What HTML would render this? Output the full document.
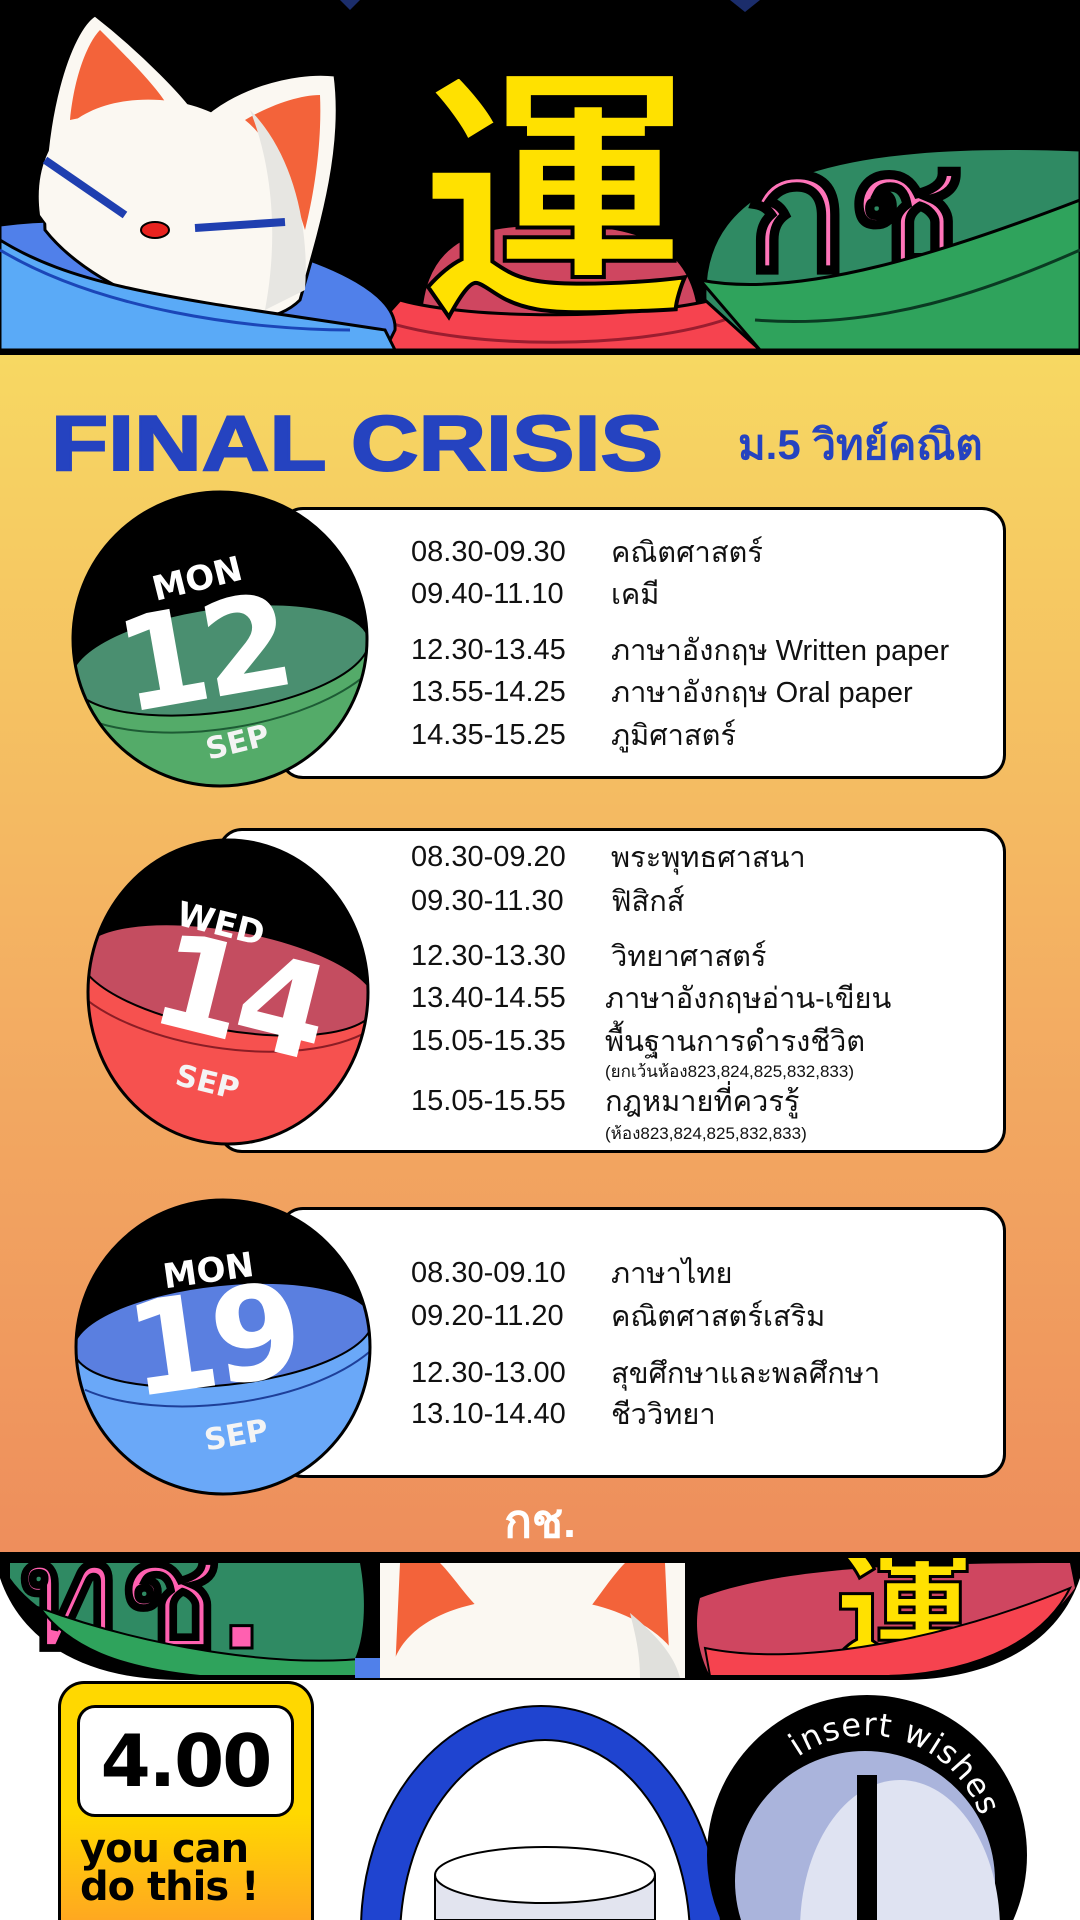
<!DOCTYPE html>
<html><head><meta charset="utf-8">
<style>
*{margin:0;padding:0;box-sizing:border-box}
html,body{width:1080px;height:1920px;overflow:hidden}
body{background:#fff;font-family:"Liberation Sans","Noto Sans CJK SC",sans-serif;position:relative}
.abs{position:absolute}
.panel{left:0;top:350px;width:1080px;height:1208px;background:linear-gradient(#f7d862,#f3ad62 55%,#ee8e5c);border-top:5px solid #000;border-bottom:6px solid #000}
.card{position:absolute;background:#fff;border:3px solid #000;border-radius:24px}
.row{position:absolute;font-size:29px;color:#111;white-space:nowrap;font-family:"Liberation Sans",sans-serif;line-height:36px}
.row .t{position:absolute;left:0;top:0}
.row .n{position:absolute;left:200px;top:1px}
.small{position:absolute;font-size:17px;color:#111;white-space:nowrap}
</style></head><body>

<svg class="abs" style="left:0;top:0" width="1080" height="352" viewBox="0 0 1080 352">
<rect width="1080" height="352" fill="#000"/>
<polygon points="340,0 360,0 350,10" fill="#1b2d6b"/>
<polygon points="730,0 760,0 745,12" fill="#1b2d6b"/>
<path d="M420,330 C420,250 460,220 560,225 C660,222 700,260 700,330 Z" fill="#cf4660" stroke="#000" stroke-width="3"/>
<path d="M355,350 L400,300 C470,320 640,320 720,298 L760,350 Z" fill="#f6434f" stroke="#000" stroke-width="3"/>
<path d="M380,320 C470,350 640,350 730,318" fill="none" stroke="#9a1d2f" stroke-width="3"/>
<text x="555" y="295" font-size="270" font-weight="bold" fill="#ffe100" stroke="#000" stroke-width="4" text-anchor="middle" font-family="Noto Sans CJK SC,sans-serif">運</text>
<path d="M705,300 C700,180 830,140 1080,150 L1080,350 L760,350 Z" fill="#2f8a63" stroke="#000" stroke-width="3"/>
<text x="745" y="270" font-size="170" font-weight="bold" fill="#ff74b9" stroke="#000" stroke-width="4" font-family="sans-serif">กช.</text>
<path d="M700,280 C800,300 950,250 1080,200 L1080,350 L760,350 Z" fill="#2fa35c" stroke="#000" stroke-width="3"/>
<path d="M755,320 C880,330 990,290 1080,250" fill="none" stroke="#0a3a22" stroke-width="3"/>
<path d="M0,225 C150,205 400,260 395,330 L385,350 L0,350 Z" fill="#5080ea" stroke="#000" stroke-width="3"/>
<path d="M45,230 C40,120 70,30 95,15 C140,50 190,100 200,120 C230,90 290,70 335,75 C345,150 320,230 300,300 C250,350 100,300 45,230 Z" fill="#fbf8f2" stroke="#000" stroke-width="3"/>
<path d="M70,120 C75,70 90,40 100,30 C130,60 160,90 170,110 C130,110 95,115 70,120 Z" fill="#f3633a"/>
<path d="M245,120 C270,105 300,95 320,95 C322,140 315,190 305,230 C290,180 270,140 245,120 Z" fill="#f3633a"/>
<path d="M40,215 C30,140 80,95 160,100 C240,105 300,170 305,260 C300,330 120,330 40,215Z" fill="#fbf8f2"/>
<path d="M250,110 C290,150 310,220 305,290 L265,310 C280,230 270,160 250,110Z" fill="#e7e6e2"/>
<line x1="45" y1="160" x2="125" y2="215" stroke="#1f3fb0" stroke-width="8"/>
<line x1="195" y1="228" x2="285" y2="222" stroke="#1f3fb0" stroke-width="8"/>
<ellipse cx="155" cy="230" rx="14" ry="8" fill="#e8231f" stroke="#000" stroke-width="2"/>
<path d="M0,240 C80,290 190,300 385,330 L395,350 L0,350Z" fill="#5aaaf7" stroke="#000" stroke-width="3"/>
<path d="M0,250 C100,310 250,330 350,330" fill="none" stroke="#1b46b8" stroke-width="3"/>
</svg>

<div class="abs panel"></div>
<div class="abs" style="left:51px;top:398px;font-size:78px;font-weight:900;color:#2543c0;transform:scaleX(1.2);transform-origin:left;font-family:'Liberation Sans',sans-serif;-webkit-text-stroke:2px #2543c0">FINAL CRISIS</div>
<div class="abs" style="left:738px;top:412px;font-size:42px;font-weight:bold;color:#2543c0">ม.5 วิทย์คณิต</div>

<div class="card" style="left:279px;top:507px;width:727px;height:272px"></div>
<div class="abs" style="left:411px;top:0">
<div class="row" style="top:534px"><span class="t">08.30-09.30</span><span class="n">คณิตศาสตร์</span></div>
<div class="row" style="top:576px"><span class="t">09.40-11.10</span><span class="n">เคมี</span></div>
<div class="row" style="top:632px"><span class="t">12.30-13.45</span><span class="n">ภาษาอังกฤษ Written paper</span></div>
<div class="row" style="top:674px"><span class="t">13.55-14.25</span><span class="n">ภาษาอังกฤษ Oral paper</span></div>
<div class="row" style="top:717px"><span class="t">14.35-15.25</span><span class="n">ภูมิศาสตร์</span></div>
</div>

<div class="card" style="left:218px;top:828px;width:788px;height:325px"></div>
<div class="abs" style="left:411px;top:0">
<div class="row" style="top:839px"><span class="t">08.30-09.20</span><span class="n">พระพุทธศาสนา</span></div>
<div class="row" style="top:883px"><span class="t">09.30-11.30</span><span class="n">ฟิสิกส์</span></div>
<div class="row" style="top:938px"><span class="t">12.30-13.30</span><span class="n">วิทยาศาสตร์</span></div>
<div class="row" style="top:980px"><span class="t">13.40-14.55</span><span class="n" style="left:194px">ภาษาอังกฤษอ่าน-เขียน</span></div>
<div class="row" style="top:1023px"><span class="t">15.05-15.35</span><span class="n" style="left:194px">พื้นฐานการดำรงชีวิต</span></div>
<div class="small" style="left:194px;top:1058px">(ยกเว้นห้อง823,824,825,832,833)</div>
<div class="row" style="top:1083px"><span class="t">15.05-15.55</span><span class="n" style="left:194px">กฎหมายที่ควรรู้</span></div>
<div class="small" style="left:194px;top:1120px">(ห้อง823,824,825,832,833)</div>
</div>

<div class="card" style="left:279px;top:1207px;width:727px;height:271px"></div>
<div class="abs" style="left:411px;top:0">
<div class="row" style="top:1255px"><span class="t">08.30-09.10</span><span class="n">ภาษาไทย</span></div>
<div class="row" style="top:1298px"><span class="t">09.20-11.20</span><span class="n">คณิตศาสตร์เสริม</span></div>
<div class="row" style="top:1355px"><span class="t">12.30-13.00</span><span class="n">สุขศึกษาและพลศึกษา</span></div>
<div class="row" style="top:1396px"><span class="t">13.10-14.40</span><span class="n">ชีววิทยา</span></div>
</div>

<svg class="abs" style="left:0;top:0" width="1080" height="1560" viewBox="0 0 1080 1560">
<defs>
<clipPath id="c1"><circle cx="220" cy="639" r="147"/></clipPath>
<clipPath id="c2"><ellipse cx="228" cy="992" rx="140" ry="152"/></clipPath>
<clipPath id="c3"><circle cx="223" cy="1347" r="147"/></clipPath>
</defs>
<g clip-path="url(#c1)">
<circle cx="220" cy="639" r="147" fill="#000"/>
<g transform="rotate(-8 220 660)">
<rect x="60" y="660" width="330" height="200" fill="#54ab69"/>
<ellipse cx="220" cy="660" rx="150" ry="52" fill="#4a8f70" stroke="#000" stroke-width="2"/>
<path d="M80,700 C150,740 300,740 370,690" fill="none" stroke="#1d5b34" stroke-width="2"/>
</g>
<text x="200" y="590" transform="rotate(-14 200 590)" font-size="34" font-weight="bold" fill="#fff" text-anchor="middle" font-family="DejaVu Sans,sans-serif">MON</text>
<text x="210" y="698" transform="rotate(-10 210 698)" font-size="130" font-weight="bold" fill="#fff" text-anchor="middle" font-family="DejaVu Sans,sans-serif" letter-spacing="-6">12</text>
<text x="240" y="752" transform="rotate(-14 240 752)" font-size="30" font-weight="bold" fill="#f4f4f4" text-anchor="middle" font-family="DejaVu Sans,sans-serif">SEP</text>
</g>
<circle cx="220" cy="639" r="147" fill="none" stroke="#000" stroke-width="3"/>

<g clip-path="url(#c2)">
<rect x="80" y="830" width="300" height="330" fill="#000"/>
<g transform="rotate(10 228 980)">
<rect x="60" y="980" width="340" height="200" fill="#f6514f"/>
<ellipse cx="228" cy="980" rx="150" ry="50" fill="#c44d60" stroke="#000" stroke-width="2"/>
<path d="M85,1020 C150,1060 300,1060 370,1010" fill="none" stroke="#8b1d25" stroke-width="2"/>
</g>
<text x="218" y="935" transform="rotate(14 218 935)" font-size="34" font-weight="bold" fill="#fff" text-anchor="middle" font-family="DejaVu Sans,sans-serif">WED</text>
<text x="228" y="1040" transform="rotate(14 228 1040)" font-size="130" font-weight="bold" fill="#fff" text-anchor="middle" font-family="DejaVu Sans,sans-serif" letter-spacing="-6">14</text>
<text x="205" y="1092" transform="rotate(14 205 1092)" font-size="30" font-weight="bold" fill="#f4f4f4" text-anchor="middle" font-family="DejaVu Sans,sans-serif">SEP</text>
</g>
<ellipse cx="228" cy="992" rx="140" ry="152" fill="none" stroke="#000" stroke-width="3"/>

<g clip-path="url(#c3)">
<circle cx="223" cy="1347" r="147" fill="#000"/>
<g transform="rotate(-6 223 1335)">
<rect x="60" y="1335" width="330" height="200" fill="#6aa8f8"/>
<ellipse cx="223" cy="1335" rx="150" ry="50" fill="#5a7fe0" stroke="#000" stroke-width="2"/>
<path d="M80,1375 C150,1415 300,1415 370,1365" fill="none" stroke="#1e3f99" stroke-width="2"/>
</g>
<text x="210" y="1282" transform="rotate(-8 210 1282)" font-size="34" font-weight="bold" fill="#fff" text-anchor="middle" font-family="DejaVu Sans,sans-serif">MON</text>
<text x="218" y="1385" transform="rotate(-8 218 1385)" font-size="130" font-weight="bold" fill="#fff" text-anchor="middle" font-family="DejaVu Sans,sans-serif" letter-spacing="-6">19</text>
<text x="238" y="1445" transform="rotate(-10 238 1445)" font-size="30" font-weight="bold" fill="#f4f4f4" text-anchor="middle" font-family="DejaVu Sans,sans-serif">SEP</text>
</g>
<circle cx="223" cy="1347" r="147" fill="none" stroke="#000" stroke-width="3"/>
</svg>

<div class="abs" style="left:0;width:1080px;top:1485px;text-align:center;font-size:46px;font-weight:bold;color:#fff">กช.</div>

<svg class="abs" style="left:0;top:1558px" width="1080" height="130" viewBox="0 0 1080 130">
<path d="M0,0 L1080,0 L1080,20 C1060,80 1000,122 900,122 L180,122 C80,122 20,80 0,20 Z" fill="#000"/>
<path d="M10,5 L360,5 C370,60 360,110 340,118 C200,118 60,90 10,20Z" fill="#2f8a63"/>
<text x="20" y="90" font-size="150" font-weight="bold" fill="#ff60b0" stroke="#000" stroke-width="3">ทช.</text>
<path d="M40,50 C150,90 280,110 370,100 L360,118 L200,118 C120,110 70,90 40,50Z" fill="#2fa35c" stroke="#000" stroke-width="2"/>
<rect x="355" y="100" width="330" height="20" fill="#5080ea"/>
<rect x="380" y="5" width="305" height="115" fill="#fbf8f2"/>
<path d="M400,5 L440,5 C455,20 470,45 485,55 L395,115 Z" fill="#f3633a"/>
<path d="M665,5 L625,5 C610,20 595,45 585,55 L670,115 Z" fill="#f3633a"/>
<path d="M390,120 C395,70 450,40 535,40 C620,40 680,80 685,120Z" fill="#fbf8f2"/>
<path d="M630,55 C660,80 675,100 680,120 L640,120 C640,95 635,75 630,55Z" fill="#e0e0dc"/>
<path d="M700,40 C780,10 900,5 1070,5 L1075,30 C1030,90 950,118 880,118 L710,118 C695,90 695,60 700,40Z" fill="#cf4660"/>
<text x="835" y="100" font-size="140" font-weight="bold" fill="#ffe100" stroke="#000" stroke-width="3" font-family="Noto Sans CJK SC,sans-serif">運</text>
<path d="M705,90 C800,110 950,80 1070,30 C1040,90 960,118 880,118 L710,118Z" fill="#f6434f" stroke="#000" stroke-width="2"/>
</svg>

<div class="abs" style="left:58px;top:1681px;width:256px;height:239px;border:3px solid #000;border-bottom:none;border-radius:26px 26px 0 0;background:linear-gradient(#ffd800 55%,#ffa820)"></div>
<div class="abs" style="left:77px;top:1705px;width:217px;height:112px;border:3px solid #000;border-radius:18px;background:#fff;text-align:center;font-size:72px;font-weight:bold;line-height:106px;font-family:'DejaVu Sans',sans-serif;letter-spacing:-2px">4.00</div>
<div class="abs" style="left:80px;top:1830px;font-size:40px;font-weight:bold;line-height:38px;font-family:'DejaVu Sans',sans-serif;letter-spacing:-1px">you can<br>do this !</div>

<svg class="abs" style="left:0;top:1680px" width="1080" height="240" viewBox="0 0 1080 240">
<ellipse cx="541" cy="250" rx="180" ry="224" fill="#1f44d0" stroke="#000" stroke-width="2"/>
<ellipse cx="545" cy="260" rx="145" ry="200" fill="#fff" stroke="#000" stroke-width="2"/>
<path d="M435,195 L435,240 L655,240 L655,195" fill="#e2e4ef" stroke="#000" stroke-width="2"/>
<ellipse cx="545" cy="195" rx="110" ry="28" fill="#fff" stroke="#000" stroke-width="2"/>
<circle cx="867" cy="175" r="160" fill="#000"/>
<circle cx="865" cy="201" r="130" fill="#aab4dc"/>
<ellipse cx="900" cy="250" rx="100" ry="150" fill="#dfe3f2"/>
<rect x="857" y="95" width="20" height="150" fill="#000"/>
<defs><path id="arc" d="M798,77 A120,120 0 0,1 985,196"/></defs>
<text font-size="32" fill="#fff" font-family="DejaVu Sans,sans-serif" letter-spacing="1"><textPath href="#arc">insert wishes</textPath></text>
</svg>

</body></html>
